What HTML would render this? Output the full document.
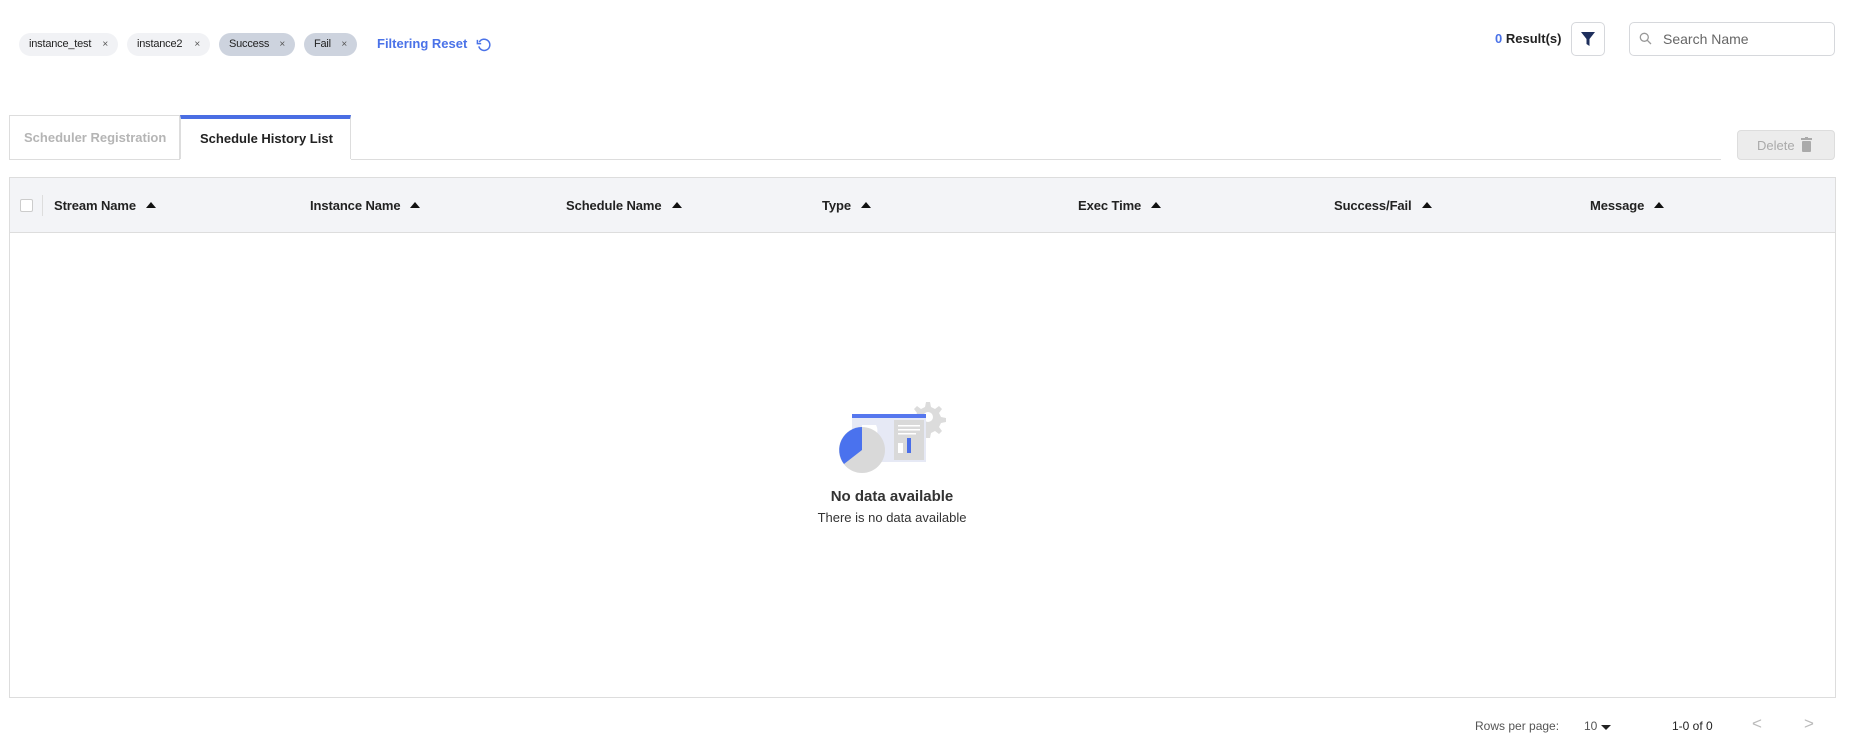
<!DOCTYPE html>
<html><head><meta charset="utf-8"><style>
*{box-sizing:border-box;margin:0;padding:0}
body{width:1849px;height:755px;background:#fff;font-family:"Liberation Sans",sans-serif;color:#222;position:relative;overflow:hidden}
.abs{position:absolute}
.chip{position:absolute;top:33px;height:23px;border-radius:12px;font-size:11px;line-height:23px;padding-left:10px;color:#222;letter-spacing:-0.2px}
.chip span{position:absolute;right:10px;font-size:10px;color:#555}
.c1{background:#f1f2f5}.c2{background:#cdd3de}
.th{position:absolute;top:198px;font-size:13px;font-weight:bold;color:#222;letter-spacing:-0.1px}
.th:after{content:"";display:inline-block;margin-left:10px;border-left:5px solid transparent;border-right:5px solid transparent;border-bottom:6px solid #111;vertical-align:2px}
</style></head><body>
<div class="chip c1" style="left:19px;width:99px">instance_test<span>×</span></div>
<div class="chip c1" style="left:127px;width:83px">instance2<span>×</span></div>
<div class="chip c2" style="left:219px;width:76px">Success<span>×</span></div>
<div class="chip c2" style="left:304px;width:53px">Fail<span>×</span></div>
<div class="abs" style="left:377px;top:36px;font-size:13px;font-weight:bold;color:#4a72e8">Filtering Reset</div>
<svg class="abs" style="left:476px;top:37px" width="15" height="15" viewBox="0 0 16 16"><path d="M3.5 5.5A6 6 0 1 1 3 10" fill="none" stroke="#4a72e8" stroke-width="1.6"/><path d="M1.5 3v4h4" fill="none" stroke="#4a72e8" stroke-width="1.6"/></svg>

<div class="abs" style="left:1495px;top:31px;font-size:13px;font-weight:bold"><span style="color:#4a72e8">0</span> Result(s)</div>
<div class="abs" style="left:1571px;top:22px;width:34px;height:34px;border:1px solid #d6d8dc;border-radius:5px"></div>
<svg class="abs" style="left:1581px;top:32px" width="14" height="14" viewBox="0 0 14 14"><path d="M0 0h14L8.5 7v7L5.5 12V7z" fill="#1e2f5c"/></svg>
<div class="abs" style="left:1629px;top:22px;width:206px;height:34px;border:1px solid #d6d8dc;border-radius:5px"></div>
<svg class="abs" style="left:1639px;top:32px" width="13" height="13" viewBox="0 0 13 13"><circle cx="5.3" cy="5.3" r="4" fill="none" stroke="#999" stroke-width="1.3"/><path d="M8.3 8.3L12 12" stroke="#999" stroke-width="1.3"/></svg>
<div class="abs" style="left:1663px;top:31px;font-size:14px;color:#666">Search Name</div>

<div class="abs" style="left:9px;top:115px;width:171px;height:45px;border:1px solid #ddd;border-bottom:none"></div>
<div class="abs" style="left:24px;top:130px;font-size:13px;font-weight:bold;color:#b5b5b5">Scheduler Registration</div>
<div class="abs" style="left:180px;top:115px;width:171px;height:45px;border:1px solid #ddd;border-top:4px solid #4a6ee3;border-bottom:none;background:#fff"></div>
<div class="abs" style="left:200px;top:131px;font-size:13px;font-weight:bold;color:#222">Schedule History List</div>
<div class="abs" style="left:9px;top:159px;width:1712px;height:1px;background:#ddd"></div>
<div class="abs" style="left:180px;top:159px;width:171px;height:1px;background:#fff"></div>
<div class="abs" style="left:1737px;top:130px;width:98px;height:30px;background:#ececec;border:1px solid #ddd;border-radius:4px"></div>
<div class="abs" style="left:1757px;top:138px;font-size:13px;color:#aaa">Delete</div>
<svg class="abs" style="left:1801px;top:137px" width="11" height="15" viewBox="0 0 11 15"><rect x="0" y="1" width="11" height="2" fill="#aaa"/><rect x="4" y="0" width="3" height="2" fill="#aaa"/><rect x="1" y="4" width="9" height="11" rx="1" fill="#aaa"/></svg>

<div class="abs" style="left:9px;top:177px;width:1827px;height:521px;border:1px solid #ddd"></div>
<div class="abs" style="left:10px;top:178px;width:1825px;height:55px;background:#f3f4f7;border-bottom:1px solid #ddd"></div>
<div class="abs" style="left:20px;top:199px;width:13px;height:13px;border:1px solid #ccc;border-radius:2px;background:#fff"></div>
<div class="abs" style="left:42px;top:195px;width:1px;height:21px;background:#ddd"></div>
<div class="th" style="left:54px">Stream Name</div>
<div class="th" style="left:310px">Instance Name</div>
<div class="th" style="left:566px">Schedule Name</div>
<div class="th" style="left:822px">Type</div>
<div class="th" style="left:1078px">Exec Time</div>
<div class="th" style="left:1334px">Success/Fail</div>
<div class="th" style="left:1590px">Message</div>

<svg class="abs" style="left:832px;top:398px" width="120" height="80" viewBox="0 0 120 80">
<path d="M94 4l4 0 1 5 4 2 4-3 3 3-3 4 2 4 5 1v4l-5 1-2 4 3 4-3 3-4-3-4 2-1 5h-4l-1-5-4-2-4 3-3-3 3-4-2-4-5-1v-4l5-1 2-4-3-4 3-3 4 3 4-2z" fill="#dcdcdc"/>
<circle cx="96" cy="19" r="5" fill="#fff"/>
<rect x="20" y="16" width="74" height="48" fill="#e6e9f5"/>
<rect x="20" y="16" width="74" height="4" fill="#5677ee"/>
<rect x="62" y="22" width="30" height="40" fill="#d9d9d9"/>
<rect x="66" y="27" width="22" height="1.5" fill="#fff"/><rect x="66" y="31" width="22" height="1.5" fill="#fff"/><rect x="66" y="35" width="18" height="1.5" fill="#fff"/>
<rect x="66" y="45" width="5" height="10" fill="#fff"/><rect x="75" y="40" width="4" height="15" fill="#4a6ee8"/>
<path d="M30 27h14a12 12 0 0 1-2 14H30z" fill="#fff"/>
<circle cx="30" cy="52" r="23" fill="#d9d9d9"/>
<path d="M30 52L12 66A23 23 0 0 1 30 29z" fill="#4a72ee"/>
</svg>
<div class="abs" style="left:0;width:1784px;top:488px;text-align:center;font-size:15px;font-weight:bold;color:#333">No data available</div>
<div class="abs" style="left:0;width:1784px;top:510px;text-align:center;font-size:13px;color:#333">There is no data available</div>

<div class="abs" style="left:1475px;top:719px;font-size:12px;color:#555">Rows per page:</div>
<div class="abs" style="left:1584px;top:719px;font-size:12px;color:#555">10</div>
<div class="abs" style="left:1601px;top:725px;border-left:5px solid transparent;border-right:5px solid transparent;border-top:5px solid #222"></div>
<div class="abs" style="left:1672px;top:719px;font-size:12px;color:#222">1-0 of 0</div>
<div class="abs" style="left:1752px;top:714px;font-size:17px;color:#bbb">&lt;</div>
<div class="abs" style="left:1804px;top:714px;font-size:17px;color:#bbb">&gt;</div>
</body></html>
